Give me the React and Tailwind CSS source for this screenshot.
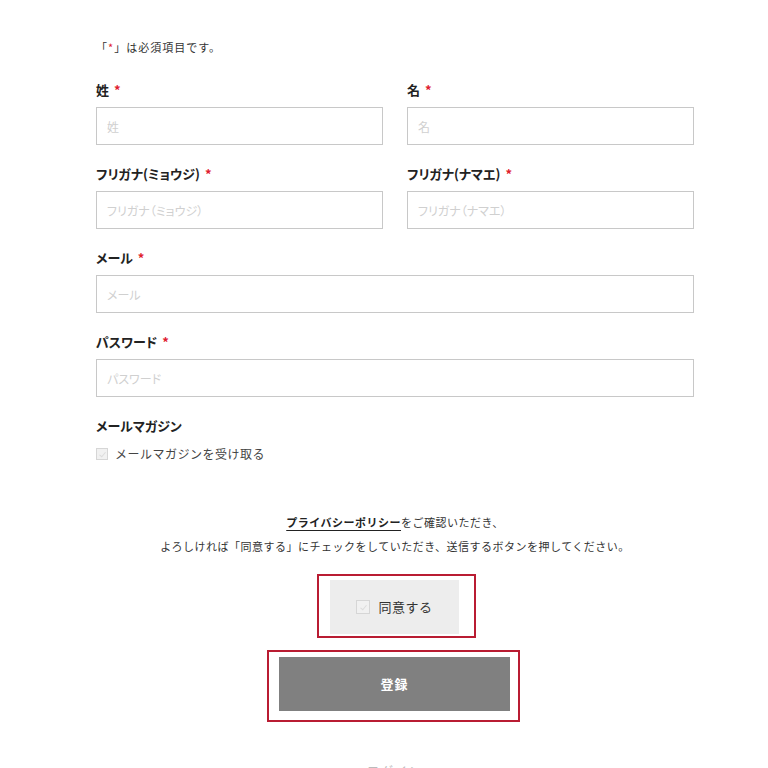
import React from "react";

const font = "font-['Noto_Sans_CJK_JP','Noto_Sans',sans-serif]";

function Req() {
  return <span className="text-[#e0202e] ml-[5px]">*</span>;
}

function Field({ label, placeholder, req = true }) {
  return (
    <div className="flex flex-col">
      <div className="h-[20px] leading-[20px] text-[13px] font-bold text-[#222] mb-[7px] [font-feature-settings:'palt']">
        {label}
        {req && <Req />}
      </div>
      <input
        readOnly
        placeholder={placeholder}
        className="h-[38px] w-full border border-[#c8c8c8] bg-white px-[10px] text-[12px] text-[#333] placeholder:text-[#d0d0d0] outline-none [font-feature-settings:'palt']"
      />
    </div>
  );
}

function Check({ size = 12 }) {
  return (
    <span
      className={`inline-flex items-center justify-center border border-[#d6d6d6] bg-[#f1f1f1] ${size === 12 ? "w-[12px] h-[12px]" : "w-[14px] h-[14px]"}`}
    >
      <svg viewBox="0 0 12 12" className="w-[9px] h-[9px]" fill="none" stroke="#dcdcdc" strokeWidth="1.4">
        <path d="M2 6.5 L5 9 L10 3" />
      </svg>
    </span>
  );
}

export default function App() {
  return (
    <div className={`${font} bg-white min-h-[900px] w-full`}>
      <div className="ml-[96px] w-[598px] pt-[37px]">
        <p className="h-[20px] leading-[20px] text-[11px] tracking-[1px] text-[#333]">
          「<span className="text-[#e0202e]">*</span>」は必須項目です。
        </p>

        <div className="mt-[23px] flex flex-col gap-[19px]">
          <div className="grid grid-cols-2 gap-[24px]">
            <Field label="姓" placeholder="姓" />
            <Field label="名" placeholder="名" />
          </div>
          <div className="grid grid-cols-2 gap-[24px]">
            <Field label="フリガナ(ミョウジ)" placeholder="フリガナ（ミョウジ）" />
            <Field label="フリガナ(ナマエ)" placeholder="フリガナ（ナマエ）" />
          </div>
          <Field label="メール" placeholder="メール" />
          <Field label="パスワード" placeholder="パスワード" />
          <div className="flex flex-col">
            <div className="h-[20px] leading-[20px] text-[13px] font-bold text-[#222] [font-feature-settings:'palt']">
              メールマガジン
            </div>
            <label className="mt-[9px] flex items-center gap-[7px] h-[18px] text-[12px] tracking-[0.5px] text-[#444]">
              <Check />
              <span>メールマガジンを受け取る</span>
            </label>
          </div>
        </div>

        <div className="mt-[47px] text-center text-[11px] tracking-[0.5px] leading-[24px] text-[#333]">
          <p>
            <span className="underline underline-offset-[3px] font-bold text-[#222]">プライバシーポリシー</span>
            をご確認いただき、
          </p>
          <p>よろしければ「同意する」にチェックをしていただき、送信するボタンを押してください。</p>
        </div>

        <div className="mt-[16px] flex justify-center">
          <div className="ml-[3px] w-[159px] h-[64px] border-2 border-[#b91c32] pl-[11px] pt-[4px]">
            <div className="w-[129px] h-[54px] bg-[#ededed] flex items-center justify-center gap-[8px] text-[13px] text-[#333]">
              <Check size={14} />
              <span className="tracking-[0.5px]">同意する</span>
            </div>
          </div>
        </div>

        <div className="mt-[12px] flex justify-center">
          <div className="mr-[3px] w-[253px] h-[72px] border-2 border-[#b91c32] pl-[10px] pt-[5px]">
            <button className="w-[231px] h-[54px] bg-[#808080] text-white text-[13px] font-bold tracking-[1px]">
              登録
            </button>
          </div>
        </div>

        <p className="mt-[40px] text-center text-[12px] text-[#bbb] tracking-[2px]">ログイン</p>
      </div>
    </div>
  );
}
